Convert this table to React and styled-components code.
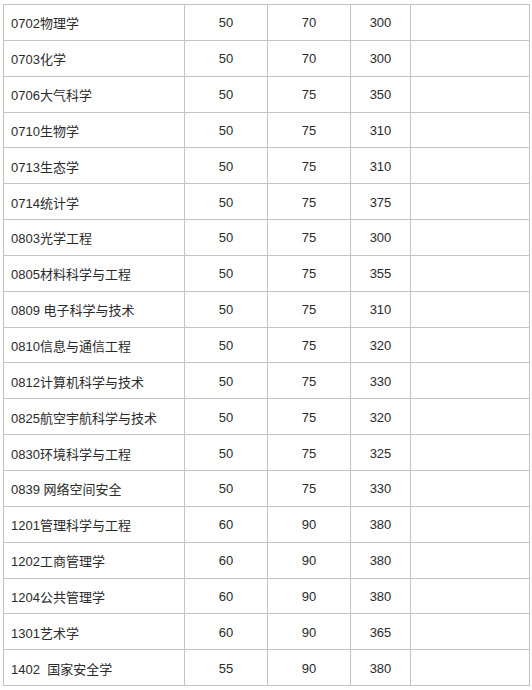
import React from 'react';
import styled, { createGlobalStyle } from 'styled-components';

const GlobalStyle = createGlobalStyle`
  html, body {
    margin: 0;
    padding: 0;
    background: #ffffff;
  }
`;

const Page = styled.div`
  padding: 4px 0 0 3px;
`;

const Table = styled.table`
  border-collapse: collapse;
  table-layout: fixed;
  width: 526px;
  font-family: "Liberation Sans", "Noto Sans CJK SC", sans-serif;
  font-size: 13px;
  color: #2a2a2a;
`;

const Col = styled.col`
  width: ${(p) => p.$w}px;
`;

const Row = styled.tr`
  height: 35.85px;
`;

const Cell = styled.td`
  border: 1px solid #c4c4c4;
  padding: 1px 0 0 ${(p) => (p.$left ? '7px' : '0')};
  text-align: ${(p) => (p.$left ? 'left' : 'center')};
  vertical-align: middle;
  white-space: pre;
  overflow: hidden;
`;

const widths = [181, 83, 83, 60, 119];

const rows = [
  ['0702物理学', 50, 70, 300],
  ['0703化学', 50, 70, 300],
  ['0706大气科学', 50, 75, 350],
  ['0710生物学', 50, 75, 310],
  ['0713生态学', 50, 75, 310],
  ['0714统计学', 50, 75, 375],
  ['0803光学工程', 50, 75, 300],
  ['0805材料科学与工程', 50, 75, 355],
  ['0809 电子科学与技术', 50, 75, 310],
  ['0810信息与通信工程', 50, 75, 320],
  ['0812计算机科学与技术', 50, 75, 330],
  ['0825航空宇航科学与技术', 50, 75, 320],
  ['0830环境科学与工程', 50, 75, 325],
  ['0839 网络空间安全', 50, 75, 330],
  ['1201管理科学与工程', 60, 90, 380],
  ['1202工商管理学', 60, 90, 380],
  ['1204公共管理学', 60, 90, 380],
  ['1301艺术学', 60, 90, 365],
  ['1402  国家安全学', 55, 90, 380],
];

export default function App() {
  return (
    <>
      <GlobalStyle />
      <Page>
        <Table>
          <colgroup>
            {widths.map((w, i) => (
              <Col key={i} $w={w} />
            ))}
          </colgroup>
          <tbody>
            {rows.map(([name, a, b, c]) => (
              <Row key={name}>
                <Cell $left>{name}</Cell>
                <Cell>{a}</Cell>
                <Cell>{b}</Cell>
                <Cell>{c}</Cell>
                <Cell />
              </Row>
            ))}
          </tbody>
        </Table>
      </Page>
    </>
  );
}
